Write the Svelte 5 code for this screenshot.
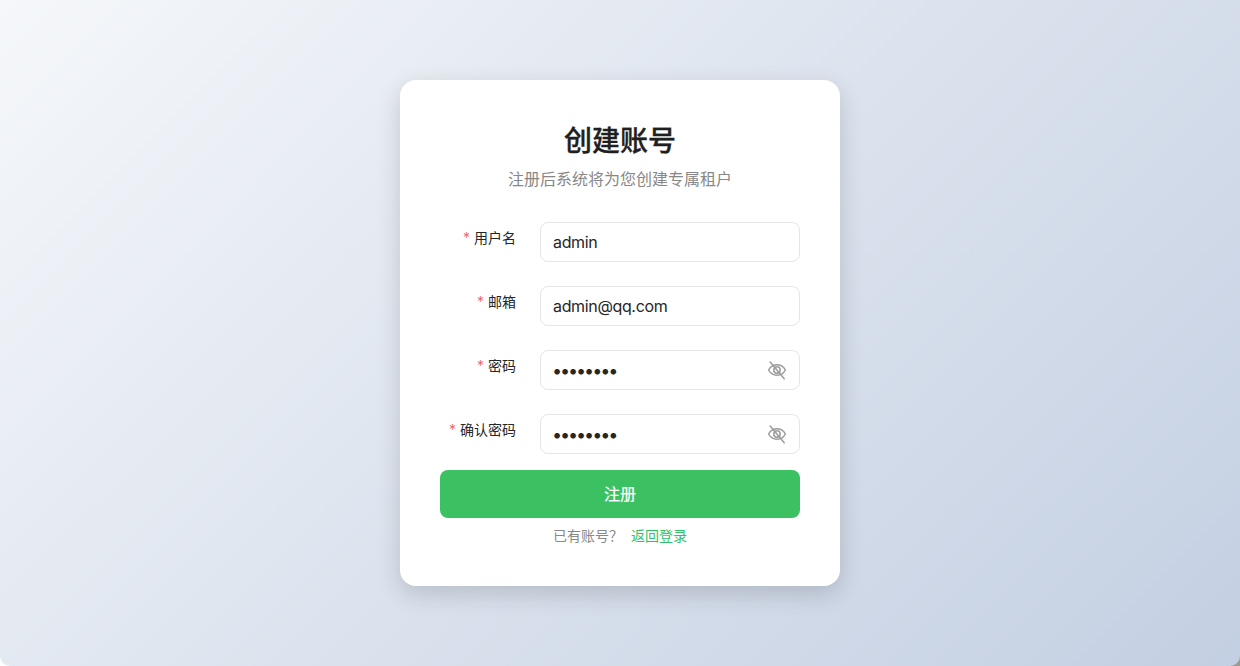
<script>
  const fields = [
    { label: '用户名', type: 'text', value: 'admin' },
    { label: '邮箱', type: 'text', value: 'admin@qq.com' },
    { label: '密码', type: 'password', value: 'password' },
    { label: '确认密码', type: 'password', value: 'password' }
  ];
</script>

<div class="page">
  <div class="card">
    <h1>创建账号</h1>
    <p class="sub">注册后系统将为您创建专属租户</p>
    <form>
      {#each fields as f}
        <div class="row">
          <label for={f.label}><span class="star">*</span>{f.label}</label>
          <div class="box">
            <input id={f.label} class:pw={f.type === 'password'} type={f.type} value={f.value} />
            {#if f.type === 'password'}
              <svg viewBox="0 0 20 20" width="20" height="20" fill="none" stroke="#9c9c9c" stroke-width="1.5" stroke-linecap="round" stroke-linejoin="round">
                <path d="M1.600 10C3.400 6.600 6.400 4.800 10 4.800S16.600 6.600 18.400 10C16.600 13.400 13.600 15.200 10 15.200S3.400 13.400 1.600 10Z" />
                <circle cx="10" cy="10" r="3.200" />
                <path d="M3.200 2 17.200 18.800" />
              </svg>
            {/if}
          </div>
        </div>
      {/each}
      <button type="button">注册</button>
    </form>
    <div class="foot"><span>已有账号？</span><a href="#login">返回登录</a></div>
  </div>
</div>

<style>
  :global(body) {
    margin: 0;
    background: linear-gradient(90deg, #fff 50%, #9a9c90 50%);
  }
  .page {
    box-sizing: border-box;
    height: 666px;
    border-radius: 0 0 10px 10px;
    background: linear-gradient(135deg, #f5f7fa 0%, #c3cfe2 100%);
    display: flex;
    justify-content: center;
    padding-top: 80px;
    font-family: Inter, "Noto Sans CJK SC", sans-serif;
  }
  .card {
    box-sizing: border-box;
    width: 440px;
    height: 506px;
    padding: 40px;
    background: #fff;
    border-radius: 16px;
    box-shadow: 0 8px 24px rgba(0, 0, 0, 0.16);
  }
  h1 {
    margin: 0;
    font-size: 28px;
    line-height: 42px;
    font-weight: 500;
    -webkit-text-stroke: 0.35px #1f1f1f;
    color: #1f1f1f;
    text-align: center;
  }
  .sub {
    margin: 6px 0 32px;
    font-size: 16px;
    line-height: 22px;
    color: #888;
    text-align: center;
  }
  .row {
    display: flex;
    margin-bottom: 24px;
  }
  .row:nth-child(4) {
    margin-bottom: 16px;
  }
  label {
    box-sizing: border-box;
    width: 100px;
    padding-right: 24px;
    text-align: right;
    font-size: 14px;
    line-height: 32px;
    color: #262626;
  }
  .star {
    color: #ee6a70;
    margin-right: 4px;
  }
  .box {
    box-sizing: border-box;
    width: 260px;
    height: 40px;
    display: flex;
    align-items: center;
    padding: 0 12px;
    border: 1px solid #e5e5e5;
    border-radius: 8px;
    background: #fff;
  }
  input {
    flex: 1;
    min-width: 0;
    border: 0;
    outline: 0;
    padding: 0;
    background: none;
    font: inherit;
    font-size: 16px;
    letter-spacing: -0.35px;
    color: #262626;
  }
  input.pw {
    font-size: 18px;
    letter-spacing: -2.100px;
    margin-left: -1px;
  }
  button {
    display: block;
    width: 100%;
    height: 48px;
    padding: 0 0 2px;
    border: 0;
    border-radius: 8px;
    background: #3cc162;
    color: #fff;
    font: inherit;
    font-size: 16px;
    font-weight: 400;
    -webkit-text-stroke: 0.2px #fff;
  }
  .foot {
    margin-top: 8px;
    display: flex;
    justify-content: center;
    font-size: 14px;
    line-height: 20px;
    color: #888;
  }
  .foot a {
    margin-left: 8px;
    color: #2fc267;
    text-decoration: none;
  }
</style>
